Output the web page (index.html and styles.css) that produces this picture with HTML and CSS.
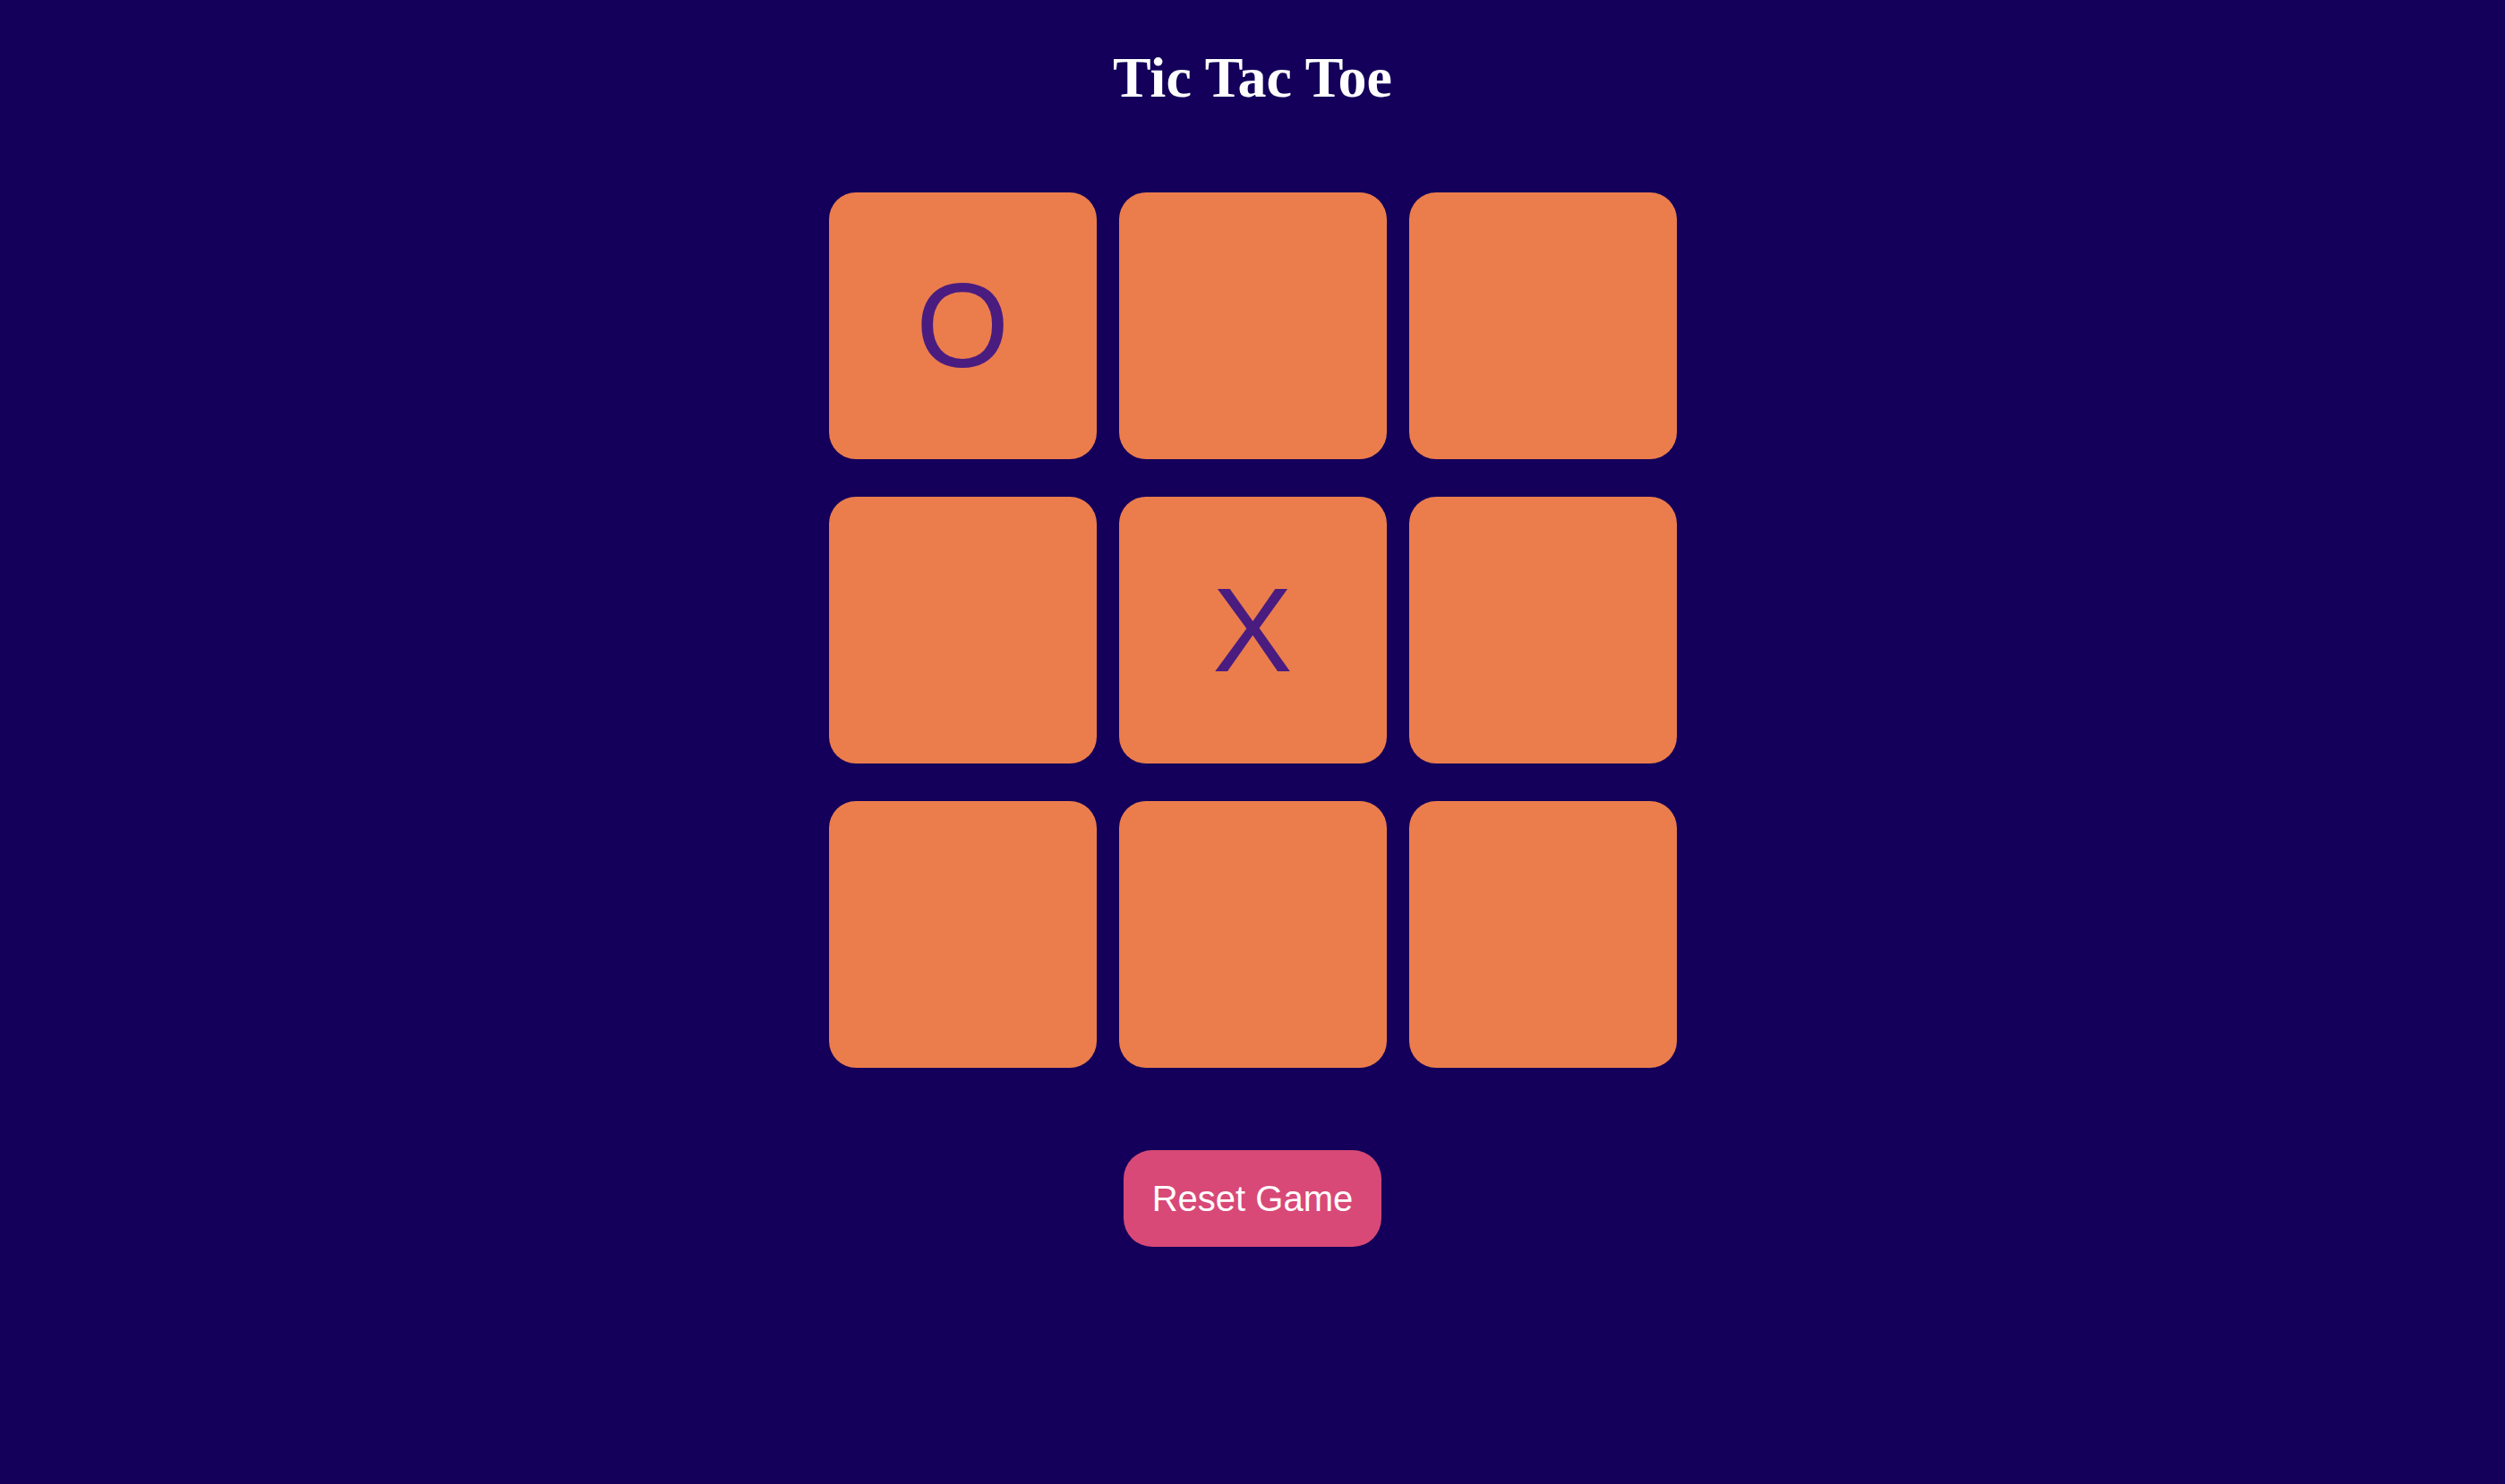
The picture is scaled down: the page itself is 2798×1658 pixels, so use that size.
FILE: index.html
```html
<!DOCTYPE html>
<html lang="en">
<head>
<meta charset="utf-8">
<title>Tic Tac Toe</title>
<link rel="stylesheet" href="styles.css">
</head>
<body>
<main class="game">
  <h1 class="title">Tic Tac Toe</h1>
  <div class="board">
    <div class="cell">O</div>
    <div class="cell"></div>
    <div class="cell"></div>
    <div class="cell"></div>
    <div class="cell">X</div>
    <div class="cell"></div>
    <div class="cell"></div>
    <div class="cell"></div>
    <div class="cell"></div>
  </div>
  <button class="reset">Reset Game</button>
</main>
</body>
</html>
```

FILE: styles.css
```css
html, body {
  margin: 0;
  padding: 0;
  background: #14005a;
  min-height: 100%;
}
body {
  min-height: 1658px;
}
.game {
  display: flex;
  flex-direction: column;
  align-items: center;
  padding-top: 52px;
}
.title {
  margin: 0;
  font-family: "Liberation Serif", "Times New Roman", serif;
  font-weight: bold;
  font-size: 64px;
  line-height: 70px;
  color: #ffffff;
}
.board {
  margin-top: 93px;
  display: grid;
  grid-template-columns: repeat(3, 299px);
  grid-template-rows: repeat(3, 298px);
  column-gap: 25px;
  row-gap: 42px;
}
.cell {
  background: #eb7d4c;
  border-radius: 30px;
  display: flex;
  align-items: center;
  justify-content: center;
  font-family: "Liberation Sans", Arial, sans-serif;
  font-size: 134px;
  color: #4a1c80;
  line-height: 1;
}
.reset {
  margin-top: 92px;
  width: 288px;
  height: 108px;
  border: none;
  border-radius: 32px;
  background: #d84977;
  color: #ffffff;
  font-family: "Liberation Sans", Arial, sans-serif;
  font-size: 40px;
  padding: 0;
}
```
